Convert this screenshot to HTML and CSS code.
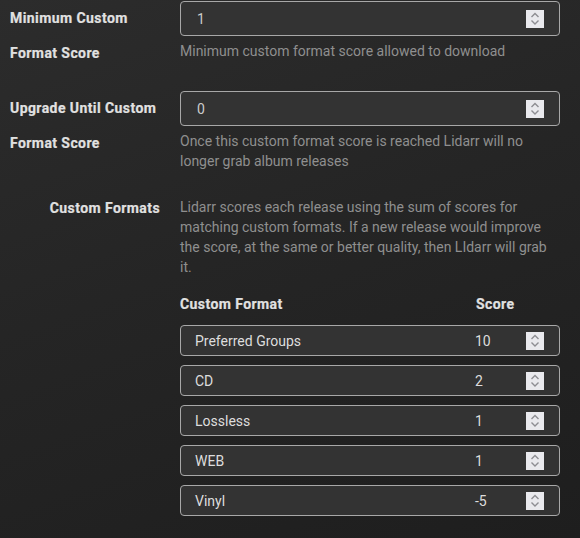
FILE: index.html
```html
<!DOCTYPE html>
<html lang="en">
<head>
<meta charset="utf-8">
<title>Quality Profile</title>
<link rel="stylesheet" href="styles.css">
</head>
<body>
<div class="form">
  <div class="group">
    <div class="label">Minimum Custom Format Score</div>
    <div class="field">
      <div class="input"><span class="value">1</span><svg class="spin" width="18" height="18" viewBox="0 0 18 18"><rect width="18" height="18" fill="#e9e9ed"/><path d="M5.5 7 L9 3.5 L12.5 7 M5.5 10.5 L9 14 L12.5 10.5" fill="none" stroke="#8d8d92" stroke-width="1.4"/></svg></div>
      <div class="help">Minimum custom format score allowed to download</div>
    </div>
  </div>
  <div class="group">
    <div class="label">Upgrade Until Custom Format Score</div>
    <div class="field">
      <div class="input"><span class="value">0</span><svg class="spin" width="18" height="18" viewBox="0 0 18 18"><rect width="18" height="18" fill="#e9e9ed"/><path d="M5.5 7 L9 3.5 L12.5 7 M5.5 10.5 L9 14 L12.5 10.5" fill="none" stroke="#8d8d92" stroke-width="1.4"/></svg></div>
      <div class="help">Once this custom format score is reached Lidarr will no longer grab album releases</div>
    </div>
  </div>
  <div class="group">
    <div class="label">Custom Formats</div>
    <div class="field">
      <div class="help help-top">Lidarr scores each release using the sum of scores for matching custom formats. If a new release would improve the score, at the same or better quality, then LIdarr will grab it.</div>
      <div class="table-head">
        <div class="name">Custom Format</div>
        <div class="score">Score</div>
      </div>
      <div class="item"><div class="name">Preferred Groups</div><div class="score"><span>10</span><svg class="spin" width="18" height="18" viewBox="0 0 18 18"><rect width="18" height="18" fill="#e9e9ed"/><path d="M5.5 7 L9 3.5 L12.5 7 M5.5 10.5 L9 14 L12.5 10.5" fill="none" stroke="#8d8d92" stroke-width="1.4"/></svg></div></div>
      <div class="item"><div class="name">CD</div><div class="score"><span>2</span><svg class="spin" width="18" height="18" viewBox="0 0 18 18"><rect width="18" height="18" fill="#e9e9ed"/><path d="M5.5 7 L9 3.5 L12.5 7 M5.5 10.5 L9 14 L12.5 10.5" fill="none" stroke="#8d8d92" stroke-width="1.4"/></svg></div></div>
      <div class="item"><div class="name">Lossless</div><div class="score"><span>1</span><svg class="spin" width="18" height="18" viewBox="0 0 18 18"><rect width="18" height="18" fill="#e9e9ed"/><path d="M5.5 7 L9 3.5 L12.5 7 M5.5 10.5 L9 14 L12.5 10.5" fill="none" stroke="#8d8d92" stroke-width="1.4"/></svg></div></div>
      <div class="item"><div class="name">WEB</div><div class="score"><span>1</span><svg class="spin" width="18" height="18" viewBox="0 0 18 18"><rect width="18" height="18" fill="#e9e9ed"/><path d="M5.5 7 L9 3.5 L12.5 7 M5.5 10.5 L9 14 L12.5 10.5" fill="none" stroke="#8d8d92" stroke-width="1.4"/></svg></div></div>
      <div class="item"><div class="name">Vinyl</div><div class="score"><span>-5</span><svg class="spin" width="18" height="18" viewBox="0 0 18 18"><rect width="18" height="18" fill="#e9e9ed"/><path d="M5.5 7 L9 3.5 L12.5 7 M5.5 10.5 L9 14 L12.5 10.5" fill="none" stroke="#8d8d92" stroke-width="1.4"/></svg></div></div>
    </div>
  </div>
</div>
</body>
</html>
```

FILE: styles.css
```css
html, body {
  margin: 0;
  height: 100%;
}
body {
  background: linear-gradient(160deg, #2c2c2c 0%, #252525 45%, #1e1e1e 100%);
  font-family: Roboto, "Liberation Sans", sans-serif;
  font-size: 14px;
  color: #cccccc;
  overflow: hidden;
}
.form {
  padding: 1px 0 0 10px;
}
.group {
  display: flex;
  margin-bottom: 20px;
}
.label {
  flex: 0 0 150px;
  margin-right: 20px;
  display: flex;
  justify-content: flex-end;
  font-weight: bold;
  letter-spacing: 0.42px;
  -webkit-text-stroke: 0.2px currentColor;
  line-height: 35px;
  color: #e1e1e1;
}
.field {
  flex: 0 0 380px;
  width: 380px;
}
.input {
  box-sizing: border-box;
  height: 35px;
  border: 1px solid #a8a8a8;
  border-radius: 4px;
  background: #333333;
  padding: 0 15px 0 16px;
  display: flex;
  align-items: center;
  justify-content: space-between;
  color: #cccccc;
}
.spin {
  display: block;
  flex: none;
}
.help {
  margin-top: 5px;
  line-height: 20px;
  color: #8f8f8f;
}
.help-top {
  margin-top: 6px;
}
.table-head {
  display: flex;
  margin-top: 17px;
  margin-bottom: 11px;
  line-height: 20px;
  font-weight: bold;
  letter-spacing: 0.42px;
  -webkit-text-stroke: 0.2px currentColor;
  color: #e1e1e1;
  padding-right: 16px;
}
.name {
  flex: 1;
}
.score {
  width: 68px;
  display: flex;
  align-items: center;
  justify-content: space-between;
}
.item {
  box-sizing: border-box;
  height: 31px;
  margin-bottom: 9px;
  border: 1px solid #a8a8a8;
  border-radius: 4px;
  background: #333333;
  display: flex;
  align-items: center;
  padding: 0 15px 0 14px;
  color: #dddddd;
}
.item .score {
  width: 69px;
  letter-spacing: 0;
}
```
